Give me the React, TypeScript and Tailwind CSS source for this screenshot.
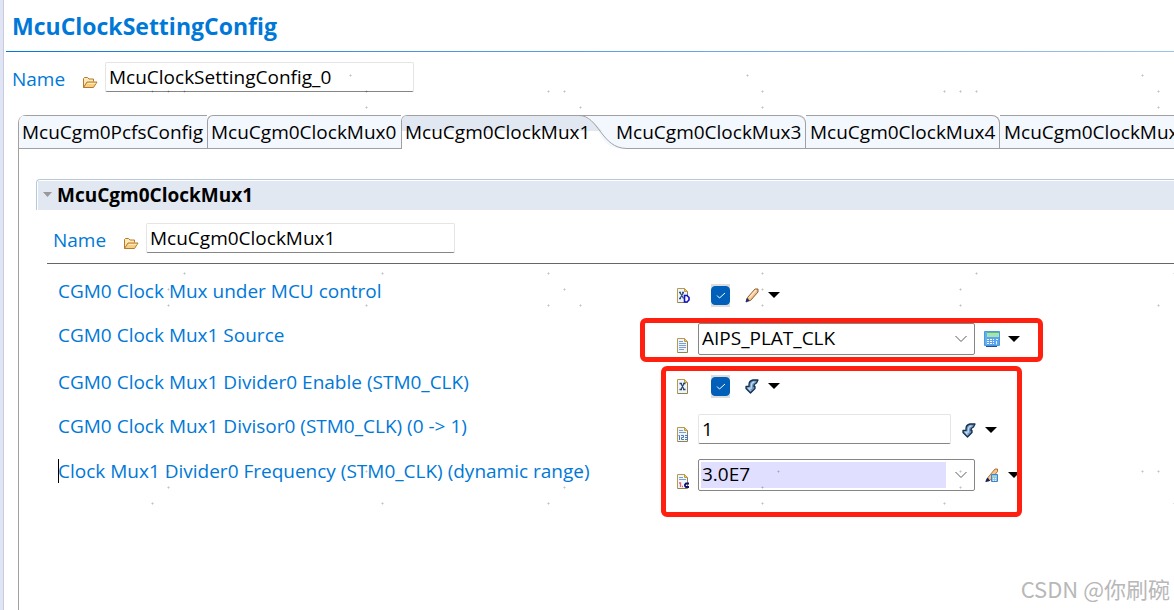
import { useState, type ReactNode } from 'react';

const DOTS = [
  [350, 75], [747, 75], [1142, 75],
  [152, 91], [168, 91], [184, 91], [366, 91], [548, 91], [564, 91], [762, 91], [944, 91], [960, 91], [976, 91], [1158, 91],
  [366, 107], [580, 107], [762, 107], [1158, 107],
  [184, 273], [382, 273], [548, 273], [762, 273], [976, 273], [1174, 273],
  [168, 289], [564, 289], [762, 289], [960, 289],
  [168, 305], [366, 305], [548, 305], [580, 305], [762, 305], [960, 305], [1158, 305],
  [168, 471], [366, 471], [580, 471], [778, 471], [960, 471], [1142, 471], [1158, 471],
  [168, 487], [564, 487], [762, 487], [960, 487],
  [152, 503], [382, 503], [548, 503], [762, 503], [944, 503], [1174, 503],
];

function Dots() {
  return (
    <svg className="pointer-events-none absolute left-0 top-0" width="1174" height="610" aria-hidden="true">
      {DOTS.map(([x, y]) => (
        <path key={`${x}-${y}`} d={`M${x - 1} ${y + 0.5}h3M${x + 0.5} ${y - 1}v3`} stroke="#000" strokeOpacity="0.13" />
      ))}
    </svg>
  );
}

function FolderIcon() {
  return (
    <svg width="16" height="13" viewBox="0 0 16 13" aria-hidden="true">
      <path d="M1.5 11.5v-9l1-1h3l1.5 1.5h4.5v2.5" fill="#fbe9b8" stroke="#b5792c" />
      <path d="M1.5 11.5l3.5-5.5h10l-3.5 5.5z" fill="#f6cf83" stroke="#b5792c" strokeLinejoin="round" />
      <path d="M5.5 7.5h8" stroke="#fdebc2" />
    </svg>
  );
}

function Sheet({ children }: { children?: ReactNode }) {
  return (
    <svg width="14" height="15" viewBox="0 0 14 15" className="overflow-visible" aria-hidden="true">
      <path d="M1.5 .5h7l3 3v11h-10z" fill="#eef5fd" />
      <path d="M1.5 14.5V.5h7" fill="none" stroke="#b59a4c" />
      <path d="M8.5 .5l3 3v11h-10" fill="none" stroke="#8d8250" />
      <path d="M8.5 .5v3h3z" fill="#e9c97c" stroke="#c39b45" />
      {children}
    </svg>
  );
}

const SHEETS: Record<string, ReactNode> = {
  boolDefault: (
    <Sheet>
      <path d="M3 4.5h2M6 4.5h2M3 10.5h2M4 4.5l3.5 6M7.5 4.5l-3.5 6" stroke="#35507c" strokeWidth="1.3" fill="none" />
      <path d="M8.5 7.5h2.5l2 2v2.5l-2 2H8.5z" fill="#fff" stroke="#1414c8" strokeWidth="1.6" />
    </Sheet>
  ),
  bool: (
    <Sheet>
      <path d="M3.5 4.5h2.5M7 4.5h2.5M3.5 10.5h2.5M7 10.5h2.5M5 4.5l3 6M8 4.5l-3 6" stroke="#2c4670" strokeWidth="1.3" fill="none" />
    </Sheet>
  ),
  text: (
    <Sheet>
      <path d="M3 3.5h4M3 5.5h7M3 7.5h7M3 9.5h7M3 11.5h5" stroke="#7f9fcb" />
    </Sheet>
  ),
  integer: (
    <Sheet>
      <path d="M3 3.5h4M3 5.5h7" stroke="#7f9fcb" />
      <path d="M2.5 8.5h1v4.5M5 8.5h2.5v2h-2v2h2.5M9 8.5h2.5v4H9M9 10.5h2.5" stroke="#4d78b4" fill="none" />
    </Sheet>
  ),
  float: (
    <Sheet>
      <path d="M3 3.5h4M3 5.5h7" stroke="#7f9fcb" />
      <path d="M3 9h1.5v4M6 12.5h1" stroke="#f0606a" strokeWidth="1.3" fill="none" />
      <path d="M13 9.5h-3l-1 1v1.5l1 1h3" stroke="#10106e" strokeWidth="1.8" fill="none" />
    </Sheet>
  ),
};

function PencilIcon() {
  return (
    <svg width="14" height="15" viewBox="0 0 14 15" aria-hidden="true">
      <path d="M2.5 9.5l7.5-8.500h3v3l-7.500 8.500-2.500.500z" fill="#f6c48c" stroke="#8a5a30" strokeLinejoin="round" />
      <path d="M4.5 9.5l6.5-7.5" stroke="#fde6c8" strokeWidth="1.5" />
      <path d="M2 10.500l2 2L1 14z" fill="#1d2c66" stroke="#1d2c66" />
    </svg>
  );
}

function CalcIcon() {
  return (
    <svg width="16" height="16" viewBox="0 0 16 16" aria-hidden="true">
      <path d="M.5 .5h15v14H.5z" fill="#63b0f0" stroke="#4a98e0" />
      <path d="M2 15h11v1H2z" fill="#1d4f9e" />
      <path d="M3 1h12v13H3z" fill="#5aa5ec" />
      <path d="M3 2h12v4H3z" fill="#a5e3b4" />
      <path d="M3 1h12v1H3z" fill="#56bd72" />
      <path d="M3 8.5h7M3 10.5h7M3 12.5h7" stroke="#fff" strokeWidth="1.2" strokeDasharray="2 1" />
      <path d="M12 8.5h2M12.5 10v3.5" stroke="#e3f2ff" />
    </svg>
  );
}

function DeriveIcon() {
  return (
    <svg width="14" height="15" viewBox="0 0 14 15" aria-hidden="true">
      <path d="M13 1H8Q4 2 4 5.500V7.500H1v2l4.500 4.500 4.500-4.500v-2H9Q8.500 5.500 11.500 4z" fill="#6f97c0" stroke="#14304f" strokeWidth="1.3" strokeLinejoin="round" />
      <path d="M9.5 2.800Q6.300 3.500 6.300 6.500V9.200H3.500L5.500 11.500" stroke="#c4daee" strokeWidth="1.2" fill="none" />
    </svg>
  );
}

function PencilCalcIcon() {
  return (
    <svg width="14" height="15" viewBox="0 0 14 15" aria-hidden="true">
      <path d="M2.5 10l7.5-9h2.5v2.5l-7.5 9-2.500.500z" fill="#f6c48c" stroke="#b06f38" />
      <path d="M2.5 10l2 2.5L.8 13.5z" fill="#141c5c" stroke="#141c5c" />
      <path d="M6.5 6.5h6v7h-6z" fill="#8cc4ef" stroke="#3c86c8" />
      <path d="M7 8.5h5" stroke="#a6dfa5" />
      <path d="M8 10.5h4M8 12.5h4" stroke="#e8f5ff" strokeDasharray="1 1" />
    </svg>
  );
}

const ACTIONS: Record<string, ReactNode> = {
  edit: <PencilIcon />,
  calc: <CalcIcon />,
  derive: <DeriveIcon />,
  editCalc: <PencilCalcIcon />,
};

function ActionMenu({ kind }: { kind: string }) {
  return (
    <button type="button" aria-label="Value options" className="flex h-4 items-center gap-2">
      <span className="flex w-4 justify-center">{ACTIONS[kind]}</span>
      <svg width="12" height="6" viewBox="0 0 12 6" aria-hidden="true">
        <path d="M0 0h12L6 6z" fill="#000" />
      </svg>
    </button>
  );
}

function CheckBox({ id }: { id: string }) {
  const [checked, setChecked] = useState(true);
  return (
    <span className="relative flex h-[23px] w-[19px] items-center bg-[#dddddd]">
      <input
        id={id}
        type="checkbox"
        checked={checked}
        onChange={(e) => setChecked(e.target.checked)}
        className="size-[19px] appearance-none rounded border border-[#005fb8] bg-white checked:bg-[#005fb8]"
      />
      <svg className="pointer-events-none absolute left-[5px] top-[7px]" width="10" height="9" viewBox="0 0 10 9" aria-hidden="true">
        <path d="M1 4.5l2.5 2.5L9 2" fill="none" stroke="#fff" />
      </svg>
    </span>
  );
}

function Combo({ id, value, filled = false }: { id: string; value: string; filled?: boolean }) {
  return (
    <span className="relative block w-[277px]">
      <select
        id={id}
        defaultValue={value}
        className={`block h-8 w-full appearance-none rounded-xs border border-[#868686] pb-0.5 pl-[3px] text-[19px] leading-6 ${
          filled ? 'bg-[linear-gradient(#e0dfff,#e0dfff)] bg-[length:245px_26px] bg-[position:2px_2px] bg-no-repeat' : 'bg-white'
        }`}
      >
        <option>{value}</option>
      </select>
      <svg className="pointer-events-none absolute right-2 top-3" width="12" height="8" viewBox="0 0 12 8" aria-hidden="true">
        <path d="M.5 1l5.5 5.5L11.5 1" fill="none" stroke="#5c5c5c" />
      </svg>
    </span>
  );
}

function TextBox({ id, value, width }: { id: string; value: string; width: string }) {
  return (
    <input
      id={id}
      type="text"
      defaultValue={value}
      className={`block h-[30px] rounded-xs border border-[#e5e5e5] border-b-[#868686] bg-white px-[3px] text-[19px] leading-6 ${width}`}
    />
  );
}

function NameField({ id, value }: { id: string; value: string }) {
  return (
    <div className="flex items-start">
      <label htmlFor={id} className="w-[70px] pt-[5px] leading-6 text-[#0078d7]">Name</label>
      <span className="mr-[7px] mt-3.5"><FolderIcon /></span>
      <TextBox id={id} value={value} width="w-[309px]" />
    </div>
  );
}

interface Param {
  id: string;
  label: string;
  sheet: string;
  action: string;
  control: 'check' | 'combo' | 'text';
  value?: string;
  filled?: boolean;
  caret?: boolean;
}

const PARAMS: Param[] = [
  { id: 'under-mcu', label: 'CGM0 Clock Mux under MCU control', sheet: 'boolDefault', action: 'edit', control: 'check' },
  { id: 'source', label: 'CGM0 Clock Mux1 Source', sheet: 'text', action: 'calc', control: 'combo', value: 'AIPS_PLAT_CLK' },
  { id: 'div-enable', label: 'CGM0 Clock Mux1 Divider0 Enable (STM0_CLK)', sheet: 'bool', action: 'derive', control: 'check' },
  { id: 'divisor', label: 'CGM0 Clock Mux1 Divisor0 (STM0_CLK) (0 -> 1)', sheet: 'integer', action: 'derive', control: 'text', value: '1' },
  { id: 'frequency', label: 'Clock Mux1 Divider0 Frequency (STM0_CLK) (dynamic range)', sheet: 'float', action: 'editCalc', control: 'combo', value: '3.0E7', filled: true, caret: true },
];

function ParamRow({ param }: { param: Param }) {
  const isCheck = param.control === 'check';
  return (
    <div className={`flex items-start ${isCheck ? 'h-[29px]' : ''}`}>
      <label htmlFor={param.id} className="relative w-[618px] shrink-0 whitespace-nowrap leading-6 text-[#0078d7]">
        {param.caret && <span className="absolute left-0 top-0 h-6 w-px bg-black" />}
        {param.label}
      </label>
      <span className={`w-[22px] shrink-0 self-end ${isCheck ? 'mb-[5px]' : 'mb-0.5'}`}>{SHEETS[param.sheet]}</span>
      {isCheck && <span className="ml-[13px] mr-3.5 mt-[5px]"><CheckBox id={param.id} /></span>}
      {param.control === 'combo' && <span className="mr-[9px]"><Combo id={param.id} value={param.value ?? ''} filled={param.filled} /></span>}
      {param.control === 'text' && <span className="mr-2.5"><TextBox id={param.id} value={param.value ?? ''} width="w-[253px]" /></span>}
      <span className="mt-2"><ActionMenu kind={param.action} /></span>
    </div>
  );
}

function Tabs() {
  const base = 'h-full shrink-0 whitespace-nowrap border-[#a0a0a0] text-left';
  return (
    <div role="tablist" className="flex h-[34px] overflow-hidden rounded-tl-lg border-l border-[#a0a0a0] leading-6">
      <button role="tab" type="button" className={`${base} w-[188px] border-y bg-[#f3f7fe] pl-[3px]`}>McuCgm0PcfsConfig</button>
      <button role="tab" type="button" className={`${base} w-[194px] rounded-tl-md border-y border-l bg-[#f3f7fe] pl-[3px]`}>McuCgm0ClockMux0</button>
      <button role="tab" type="button" aria-selected="true" className={`${base} relative w-[211px] rounded-tl-md border-l border-t pb-px pl-[3px]`}>
        <svg className="absolute -left-px -top-px" width="226" height="34" viewBox="0 0 226 34" aria-hidden="true">
          <path d="M178 0H226V34H224C190 34 204 0 178 0z" fill="#f3f7fe" />
          <path d="M1 16V6Q1 1 6 1H178C189 1 193 8 201 16z" fill="#e1e8f2" />
          <path d="M178 .5H226M178 .5C198 .5 200 33.5 226 33.5" fill="none" stroke="#a0a0a0" />
        </svg>
        <span className="relative">McuCgm0ClockMux1</span>
      </button>
      <button role="tab" type="button" className={`${base} relative w-[194px] rounded-tr-lg border-r pl-[4px]`}>
        <span className="absolute inset-y-0 left-[14px] right-0 rounded-tr-lg border-y border-[#a0a0a0] bg-[#f3f7fe]" />
        <span className="relative">McuCgm0ClockMux3</span>
      </button>
      <button role="tab" type="button" className={`${base} w-[194px] rounded-tr-lg border-y border-r bg-[#f3f7fe] pl-[4px]`}>McuCgm0ClockMux4</button>
      <button role="tab" type="button" className={`${base} flex-1 border-y bg-[#f3f7fe] pl-[4px]`}>McuCgm0ClockMux5</button>
    </div>
  );
}

export default function App() {
  return (
    <div className="relative flex min-h-screen overflow-hidden bg-white font-['Open_Sans','Noto_Sans',sans-serif] text-[19px] text-black">
      <div className="w-1 shrink-0 border-r border-[#c9cbdc] bg-[#e0e5f6]" />
      <main className="flex min-w-0 flex-1 flex-col pl-0.5">
        <h1 className="pb-[9px] pl-1.5 pt-2.5 text-[23px] font-bold leading-8 text-[#0078d7]">McuClockSettingConfig</h1>
        <div className="h-px bg-linear-to-r from-[#0078d7] to-[#9cc4e6]" />
        <div className="pb-[23px] pl-1.5 pt-2.5">
          <NameField id="config-name" value="McuClockSettingConfig_0" />
        </div>

        <div className="ml-3 flex flex-1 flex-col">
          <Tabs />
          <div className="flex-1 border-l border-[#a0a0a0] pl-[17px] pt-[30px]">
            <section>
              <div className="rounded-tl border-l border-t border-[#b8c8dc] pl-px pt-px">
                <h2 className="flex h-[29px] items-center gap-[5px] bg-[#e1e8f2] pb-0.5 pl-[5px] text-[19px] font-bold leading-6">
                  <svg width="9" height="5" viewBox="0 0 9 5" aria-hidden="true"><path d="M0 0h9L4.5 5z" fill="#999" /></svg>
                  McuCgm0ClockMux1
                </h2>
              </div>
              <div className="pl-[17px] pt-[13px]">
                <NameField id="mux-name" value="McuCgm0ClockMux1" />
              </div>
              <div className="ml-[11px] mt-2.5 h-px bg-[#666666]" />
              <div className="relative flex flex-col gap-[15px] pl-[22px] pt-[15px]">
                {PARAMS.map((param) => (
                  <ParamRow key={param.id} param={param} />
                ))}
                <div className="pointer-events-none absolute left-[604px] top-[54px] h-[44px] w-[403px] rounded-md border-5 border-[#ff2010]" />
                <div className="pointer-events-none absolute left-[625px] top-[102px] h-[151px] w-[361px] rounded-md border-5 border-[#ff2010]" />
              </div>
            </section>
          </div>
        </div>
      </main>
      <Dots />
      <div className="absolute bottom-1.5 right-1 whitespace-nowrap font-['Noto_Sans_CJK_SC',sans-serif] text-[22px] leading-8 text-[#b8b8b8]">
        CSDN @你刷碗
      </div>
    </div>
  );
}
